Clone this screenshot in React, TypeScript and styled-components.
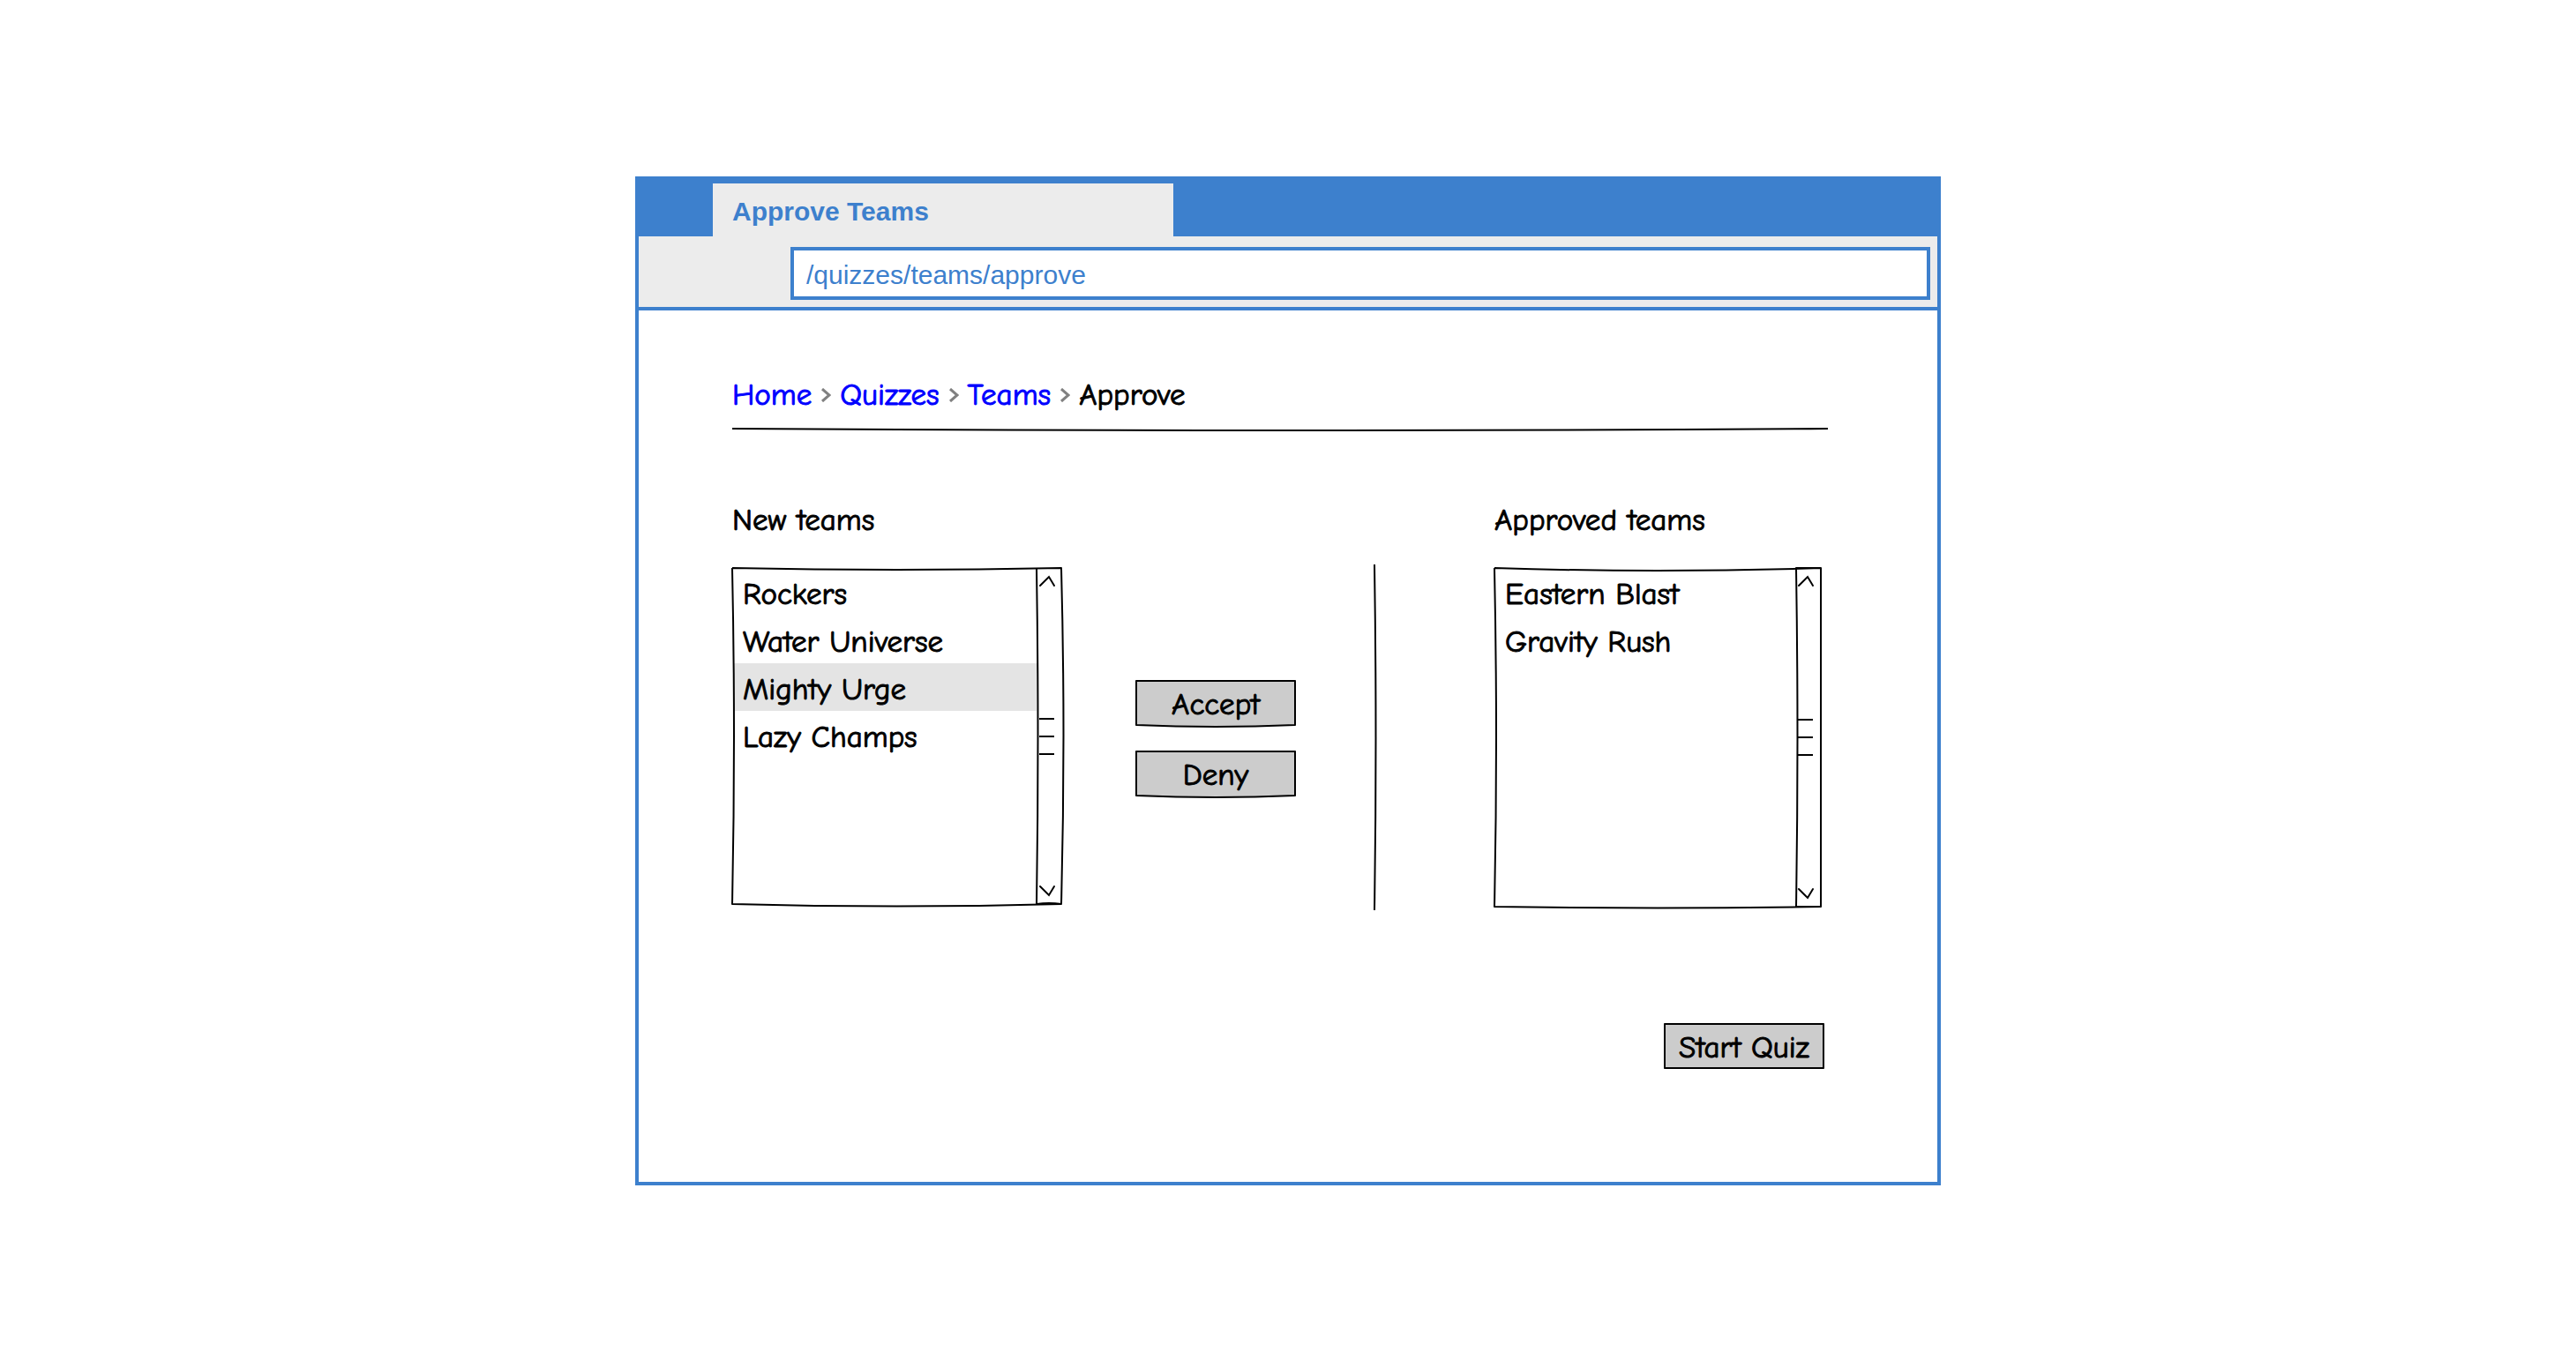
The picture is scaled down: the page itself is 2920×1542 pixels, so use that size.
import React, { useState } from 'react';
import styled, { createGlobalStyle } from 'styled-components';

const blue = '#3d80cd';
const chrome = '#ececec';
const hand = '"Comic Neue", "Open Sans", cursive, sans-serif';
const plain = '"Liberation Sans", Arial, sans-serif';

const GlobalStyle = createGlobalStyle`
  *, *::before, *::after { box-sizing: border-box; }
  body { margin: 0; background: #fff; }
  button, input, select { margin: 0; border: 0; border-radius: 0; background: none; font: inherit; color: inherit; }
`;

const Page = styled.div`
  min-height: 100vh;
  padding: 200px 24px;
  color: #000;
`;

const BrowserWindow = styled.div`
  max-width: 1480px;
  margin: 0 auto;
  border: 4px solid ${blue};
  background: #fff;
`;

const TabStrip = styled.div`
  display: flex;
  padding: 4px 84px 0;
  background: ${blue};
`;

const Tab = styled.button`
  width: 522px;
  height: 60px;
  padding: 4px 22px 0;
  background: ${chrome};
  color: ${blue};
  font: bold 30px/56px ${plain};
  text-align: left;
`;

const Toolbar = styled.div`
  padding: 12px 8px 8px 172px;
  border-bottom: 4px solid ${blue};
  background: ${chrome};
`;

const AddressInput = styled.input`
  display: block;
  width: 100%;
  height: 60px;
  padding: 4px 14px 0;
  border: 4px solid ${blue};
  background: #fff;
  color: ${blue};
  font: 30px/48px ${plain};
`;

const Content = styled.main`
  padding: 76px 124px 128px 106px;
  font: 35px/40px ${hand};
  -webkit-text-stroke: 1px;
`;

const Trail = styled.ol`
  display: flex;
  align-items: center;
  gap: 10px;
  margin: 0 0 16px;
  padding: 0;
  list-style: none;
`;

const Crumb = styled.li`
  display: flex;
  align-items: center;
  gap: 10px;
`;

const CrumbLink = styled.a`
  color: #00f;
  text-decoration: none;
`;

const Rule = styled.svg`
  display: block;
  width: 100%;
  height: 4px;
  overflow: visible;
`;

const Sketch = styled.svg`
  position: absolute;
  inset: 0;
  width: 100%;
  height: 100%;
  overflow: visible;
  pointer-events: none;
`;

const Ink = styled.path`
  fill: none;
  stroke: #000;
  stroke-width: 2px;
  stroke-linejoin: round;
  vector-effect: non-scaling-stroke;
`;

const Columns = styled.div`
  display: grid;
  grid-template-columns: 374px minmax(182px, 1fr) 136px 370px;
  margin-top: 82px;
  padding-right: 8px;
`;

const ListGroup = styled.section`
  display: flex;
  flex-direction: column;
  gap: 34px;
`;

const ListBox = styled.div<{ $height: number }>`
  position: relative;
  display: flex;
  height: ${(p) => p.$height}px;
`;

const Options = styled.select`
  flex: 1;
  min-width: 0;
  padding: 0 0 0 2px;
  appearance: none;
  overflow: hidden;
  outline: none;

  option {
    height: 54px;
    min-height: 54px;
    padding: 9px 10px 0;
    color: #000;
  }
  option:checked {
    background: linear-gradient(#e4e4e4, #e4e4e4);
    -webkit-text-fill-color: #000;
    -webkit-text-stroke: 1px #000;
  }
`;

const ScrollBar = styled.div`
  display: flex;
  flex-direction: column;
  justify-content: space-between;
  align-items: flex-start;
  width: 29px;
  padding: 4px 0;
`;

const ScrollButton = styled.button`
  display: grid;
  place-items: center;
  width: 24px;
  height: 24px;
  padding: 0;
`;

const Grip = styled.svg`
  width: 24px;
  height: 44px;
`;

const Actions = styled.div`
  display: flex;
  flex-direction: column;
  align-items: center;
  gap: 28px;
  padding: 201px 6px 0 0;
`;

const Divider = styled.svg`
  width: 4px;
  height: 392px;
  margin-top: 70px;
  overflow: visible;
`;

const SketchButton = styled.button`
  position: relative;
  width: 182px;
  height: 52px;
  padding: 4px 0 0;
  background: #ccc;
  line-height: 48px;
  white-space: nowrap;
`;

const Footer = styled.div`
  display: flex;
  justify-content: flex-end;
  margin-top: 128px;
  padding-right: 4px;
`;

function Chevron() {
  return (
    <svg width="12" height="16" viewBox="0 0 12 16" fill="none" stroke="#808080" strokeWidth="3" aria-hidden="true">
      <path d="M2 1 L10 8 L2 15" />
    </svg>
  );
}

type ListShape = { width: number; height: number; outline: string; bar: string };

const newShape: ListShape = {
  width: 374,
  height: 381,
  outline: 'M0 0 Q187 4 373 0 Q378 190 373 381 Q187 386 0 381 Q4 190 0 0',
  bar: 'M345 0 Q348 190 345 381 Q359 379 373 381',
};

const approvedShape: ListShape = {
  width: 370,
  height: 384,
  outline: 'M0 0 Q185 6 370 0 L370 384 Q185 387 0 384 Q4 192 0 0',
  bar: 'M370 0 L342 0 Q345 192 342 384 L370 384',
};

type TeamListProps = {
  id: string;
  teams: string[];
  selected: string[];
  onSelect: (teams: string[]) => void;
  shape: ListShape;
};

function TeamList({ id, teams, selected, onSelect, shape }: TeamListProps) {
  return (
    <ListBox $height={shape.height}>
      <Options
        id={id}
        multiple
        size={7}
        value={selected}
        onChange={(e) => onSelect(Array.from(e.target.selectedOptions, (option) => option.value))}
      >
        {teams.map((team) => (
          <option key={team} value={team}>{team}</option>
        ))}
      </Options>
      <ScrollBar>
        <ScrollButton type="button" aria-label="Scroll up">
          <svg width="20" height="16" viewBox="0 0 20 16" fill="none" stroke="#000" strokeWidth="2" strokeLinecap="round">
            <path d="M2 12 L12 2 L18 12" />
          </svg>
        </ScrollButton>
        <Grip viewBox="0 0 24 44" fill="none" stroke="#000" strokeWidth="2" aria-hidden="true">
          <path d="M3 2 H20 M3 22 H20 M3 42 H20" />
        </Grip>
        <ScrollButton type="button" aria-label="Scroll down">
          <svg width="20" height="16" viewBox="0 0 20 16" fill="none" stroke="#000" strokeWidth="2" strokeLinecap="round">
            <path d="M2 4 L12 14 L18 4" />
          </svg>
        </ScrollButton>
      </ScrollBar>
      <Sketch viewBox={`0 0 ${shape.width} ${shape.height}`} preserveAspectRatio="none" aria-hidden="true">
        <Ink d={shape.outline} />
        <Ink d={shape.bar} />
      </Sketch>
    </ListBox>
  );
}

function Button({ children, sag = 0, onClick }: { children: string; sag?: number; onClick?: () => void }) {
  return (
    <SketchButton type="button" onClick={onClick}>
      {children}
      <Sketch viewBox="0 0 182 52" preserveAspectRatio="none" aria-hidden="true">
        <Ink d={`M1 1 L181 1 L181 51 Q91 ${51 + sag} 1 51 Z`} />
      </Sketch>
    </SketchButton>
  );
}

export default function App() {
  const [pending, setPending] = useState(['Rockers', 'Water Universe', 'Mighty Urge', 'Lazy Champs']);
  const [approved, setApproved] = useState(['Eastern Blast', 'Gravity Rush']);
  const [picked, setPicked] = useState(['Mighty Urge']);
  const [pickedApproved, setPickedApproved] = useState<string[]>([]);

  const deny = () => {
    setPending(pending.filter((team) => !picked.includes(team)));
    setPicked([]);
  };
  const accept = () => {
    setApproved([...approved, ...picked]);
    deny();
  };

  return (
    <Page>
      <GlobalStyle />
      <BrowserWindow>
        <TabStrip role="tablist">
          <Tab type="button" role="tab" aria-selected="true">Approve Teams</Tab>
        </TabStrip>
        <Toolbar>
          <AddressInput type="text" aria-label="Address" defaultValue="/quizzes/teams/approve" />
        </Toolbar>
        <Content>
          <nav aria-label="Breadcrumb">
            <Trail>
              {['Home', 'Quizzes', 'Teams'].map((name) => (
                <Crumb key={name}>
                  <CrumbLink href="#">{name}</CrumbLink>
                  <Chevron />
                </Crumb>
              ))}
              <Crumb aria-current="page">Approve</Crumb>
            </Trail>
          </nav>
          <Rule viewBox="0 0 1242 4" preserveAspectRatio="none" aria-hidden="true">
            <Ink d="M0 2 Q621 6 1242 2" />
          </Rule>
          <Columns>
            <ListGroup>
              <label htmlFor="new-teams">New teams</label>
              <TeamList id="new-teams" teams={pending} selected={picked} onSelect={setPicked} shape={newShape} />
            </ListGroup>
            <Actions>
              <Button sag={4} onClick={accept}>Accept</Button>
              <Button sag={4} onClick={deny}>Deny</Button>
            </Actions>
            <Divider viewBox="0 0 4 392" preserveAspectRatio="none" aria-hidden="true">
              <Ink d="M0 0 Q3 196 0 392" />
            </Divider>
            <ListGroup>
              <label htmlFor="approved-teams">Approved teams</label>
              <TeamList
                id="approved-teams"
                teams={approved}
                selected={pickedApproved}
                onSelect={setPickedApproved}
                shape={approvedShape}
              />
            </ListGroup>
          </Columns>
          <Footer>
            <Button>Start Quiz</Button>
          </Footer>
        </Content>
      </BrowserWindow>
    </Page>
  );
}
